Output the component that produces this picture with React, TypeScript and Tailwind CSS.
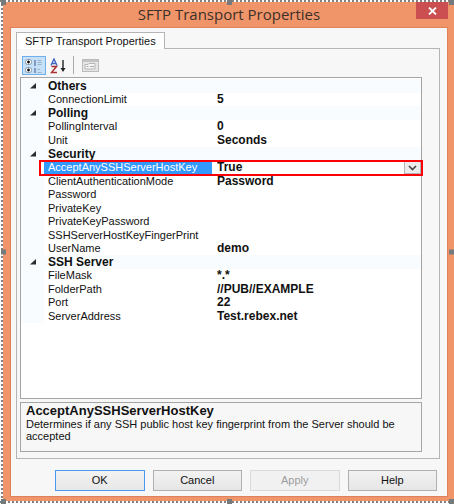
import { useState } from "react"
import clsx from "clsx"

type Property = { name: string; value: string; options?: string[] }
type Category = { title: string; items: Property[] }

const categories: Category[] = [
  { title: "Others", items: [{ name: "ConnectionLimit", value: "5" }] },
  {
    title: "Polling",
    items: [
      { name: "PollingInterval", value: "0" },
      { name: "Unit", value: "Seconds" },
    ],
  },
  {
    title: "Security",
    items: [
      { name: "AcceptAnySSHServerHostKey", value: "True", options: ["True", "False"] },
      { name: "ClientAuthenticationMode", value: "Password" },
      { name: "Password", value: "" },
      { name: "PrivateKey", value: "" },
      { name: "PrivateKeyPassword", value: "" },
      { name: "SSHServerHostKeyFingerPrint", value: "" },
      { name: "UserName", value: "demo" },
    ],
  },
  {
    title: "SSH Server",
    items: [
      { name: "FileMask", value: "*.*" },
      { name: "FolderPath", value: "//PUB//EXAMPLE" },
      { name: "Port", value: "22" },
      { name: "ServerAddress", value: "Test.rebex.net" },
    ],
  },
]

function CategorizedIcon() {
  return (
    <svg width="20" height="16" viewBox="0 0 20 16" fill="none">
      <rect x="1.5" y="1.5" width="6" height="5" rx="2" fill="#fff" stroke="#8496a8" />
      <path d="M3 4h3M4.500 2.500v3" stroke="#111" strokeWidth="1.300" />
      <rect x="1.5" y="9.500" width="6" height="5" rx="2" fill="#fff" stroke="#8496a8" />
      <path d="M3 12h3M4.500 10.500v3" stroke="#111" strokeWidth="1.300" />
      <path d="M11 2v6M11 10v5" stroke="#7f9cc0" strokeWidth="2" />
      <path d="M13.500 2.500h4M13.500 4.500h4M13.500 6.500h4M13.500 11.500h2.500M13.500 14.500h4" stroke="#9ab1cc" />
    </svg>
  )
}

function SortIcon() {
  return (
    <svg width="17" height="16" viewBox="0 0 17 16" fill="none">
      <path d="M1 7.500 4 1l3 6.500M2 5.500h4" stroke="#3f68c4" strokeWidth="1.400" />
      <path d="M1.500 8.500h5L1.500 14.500h5.500" stroke="#a83232" strokeWidth="1.500" />
      <path d="M13 2v9" stroke="#222" strokeWidth="1.400" />
      <path d="m10.500 10 2.500 4 2.500-4z" fill="#222" />
    </svg>
  )
}

function PagesIcon() {
  return (
    <svg width="17" height="14" viewBox="0 0 17 14" fill="none">
      <rect x=".5" y=".5" width="16" height="12" fill="#e6e6e6" stroke="#bbb" />
      <path d="M1 2h15" stroke="#c4c4c4" strokeWidth="2" />
      <path d="M3 5.500h3l1-1h6v5.500H3z" fill="#f6f6f6" stroke="#b6b6b6" />
      <path d="M4.500 7.500h2M8 7.500h4" stroke="#aaa" />
    </svg>
  )
}

function CategoryRow({ title }: { title: string }) {
  return (
    <tr className="h-[14px] bg-[#f8fcff]">
      <td className="p-0">
        <button aria-label={`Collapse ${title}`} className="ml-[9px] flex">
          <svg width="7" height="6" viewBox="0 0 7 6">
            <path d="M6 0v5.500H0z" fill="#2b2b2b" />
          </svg>
        </button>
      </td>
      <th colSpan={2} className="p-0 pl-1 text-left text-[12px] leading-[13px] font-bold">
        {title}
      </th>
    </tr>
  )
}

function PropertyRow({ item }: { item: Property }) {
  const selected = !!item.options
  return (
    <tr className={clsx("h-[13px] odd:h-[14px]", selected && "relative")}>
      <td className="bg-[#f8fcff] p-0" />
      <td className={clsx("p-0 pl-1 leading-[13px] whitespace-nowrap", selected && "bg-[#3399ff] text-white")}>
        {item.name}
      </td>
      <td className="p-0 pl-[5px] text-[12px] leading-[13px] font-bold">
        {item.options ? (
          <span className="relative block">
            <select
              aria-label={item.name}
              defaultValue={item.value}
              className="block h-[13px] w-full appearance-none bg-transparent p-0 leading-[13px] font-bold outline-none"
            >
              {item.options.map((o) => (
                <option key={o}>{o}</option>
              ))}
            </select>
            <span className="pointer-events-none absolute inset-y-0 right-0 flex w-[17px] items-center justify-center border border-[#b5b5b5] bg-[#ececec]">
              <svg width="9" height="6" viewBox="0 0 9 6" fill="none">
                <path d="m1 1 3.500 3.500L8 1" stroke="#444" strokeWidth="1.600" />
              </svg>
            </span>
          </span>
        ) : (
          item.value
        )}
        {selected && (
          <span className="pointer-events-none absolute -top-px -right-[2px] -bottom-[2px] left-[18px] border-2 border-[#fb0007]" />
        )}
      </td>
    </tr>
  )
}

function DialogButton({ label, primary, disabled }: { label: string; primary?: boolean; disabled?: boolean }) {
  return (
    <button
      disabled={disabled}
      className={clsx(
        "h-[21px] flex-1 border text-[11px] leading-[19px]",
        primary && "border-[#4a9bf0] bg-linear-to-b from-[#f2f2f2] to-[#e8e8e8]",
        disabled && "border-[#dadada] bg-[#f1f1f1] text-[#9d9d9d]",
        !primary && !disabled && "border-[#b0b0b0] bg-linear-to-b from-[#f2f2f2] to-[#e6e6e6]"
      )}
    >
      {label}
    </button>
  )
}

function Handle({ className }: { className: string }) {
  return <span className={clsx("pointer-events-none absolute size-[5px] bg-[#757b7d]", className)} />
}

export default function App() {
  const [sorted, setSorted] = useState(false)

  return (
    <div className="relative flex min-h-screen flex-col bg-[#f0956a] pr-[6px] pb-[7px] pl-[10px] font-['Liberation_Sans',Arial,sans-serif] text-[11px] text-[#111]">
      {/* selection frame */}
      <span className="absolute inset-y-0 left-0 w-[3px] border-l border-white bg-[repeating-linear-gradient(to_bottom,#808080_0_2px,#fff_2px_4px)]" />
      <span className="absolute inset-x-0 top-0 h-[2px] bg-[repeating-linear-gradient(to_right,#808080_0_2px,#fff_2px_4px)]" />
      <span className="absolute inset-x-0 bottom-0 h-[3px] border-b border-white bg-[repeating-linear-gradient(to_right,#808080_0_2px,#fff_2px_4px)]" />
      <Handle className="top-0 left-px" />
      <Handle className="top-0 left-1/2" />
      <Handle className="top-0 right-0" />
      <Handle className="top-1/2 left-px -translate-y-1/2" />
      <Handle className="top-1/2 right-0 -translate-y-1/2" />
      <Handle className="bottom-0 left-px" />
      <Handle className="bottom-0 left-1/2" />
      <Handle className="right-0 bottom-0" />

      <header className="relative flex h-[27px] items-center justify-center">
        <h1 className="font-['Open_Sans',sans-serif] text-[15px] leading-[20px] text-[#3d3029]">
          SFTP Transport Properties
        </h1>
        <button aria-label="Close" className="absolute top-[2px] right-0 flex h-[17px] w-8 items-center justify-center bg-[#cb4f50]">
          <svg width="9" height="8" viewBox="0 0 9 8">
            <path d="m1 .500 7 7M8 .500l-7 7" stroke="#fff" strokeWidth="1.800" />
          </svg>
        </button>
      </header>

      <main className="flex flex-1 flex-col border border-[#de8359] bg-[#f7f7f7] px-[5px] pt-1">
        <div role="tablist" className="flex">
          <button
            role="tab"
            aria-selected="true"
            className="relative -mb-px h-[17px] border border-b-0 border-[#b5b5b5] bg-white px-2 text-[11px] leading-[16px]"
          >
            SFTP Transport Properties
          </button>
        </div>

        <section className="mr-[2px] flex flex-1 flex-col border border-[#b5b5b5] bg-[#f7f7f7] pt-[7px] pr-[17px] pb-[6px] pl-[3px]">
          <div className="flex h-[21px] items-start pl-[2px]">
            <button
              aria-label="Categorized"
              onClick={() => setSorted(false)}
              className={clsx("flex h-[19px] w-6 items-center justify-center border", sorted ? "border-transparent" : "border-[#6fb0ec] bg-[#c6e0f8]")}
            >
              <CategorizedIcon />
            </button>
            <button
              aria-label="Alphabetical"
              onClick={() => setSorted(true)}
              className="ml-[3px] flex h-[19px] w-[18px] items-center justify-center"
            >
              <SortIcon />
            </button>
            <span className="mx-[6px] h-[18px] w-px bg-[#aaa]" />
            <button aria-label="Property pages" disabled className="flex h-[19px] w-5 items-center justify-center">
              <PagesIcon />
            </button>
          </div>

          <div className="flex-1 border border-[#a5a5a5] bg-white pt-px">
            <table className="w-full table-fixed border-collapse">
              <colgroup>
                <col className="w-[23px]" />
                <col className="w-[168px]" />
                <col />
              </colgroup>
              {categories.map((cat) => (
                <tbody key={cat.title}>
                  <CategoryRow title={cat.title} />
                  {cat.items.map((item) => (
                    <PropertyRow key={item.name} item={item} />
                  ))}
                </tbody>
              ))}
            </table>
          </div>

          <div className="mt-[3px] h-[50px] border border-[#a5a5a5] pt-px pl-[5px]">
            <h2 className="text-[13px] leading-[14px] font-bold">AcceptAnySSHServerHostKey</h2>
            <p className="text-[11px] leading-[12px]">
              Determines if any SSH public host key fingerprint from the Server should be accepted
            </p>
          </div>
        </section>

        <footer className="flex gap-2 pt-[11px] pr-[5px] pb-[5px] pl-[39px]">
          <DialogButton label="OK" primary />
          <DialogButton label="Cancel" />
          <DialogButton label="Apply" disabled />
          <DialogButton label="Help" />
        </footer>
      </main>
    </div>
  )
}
